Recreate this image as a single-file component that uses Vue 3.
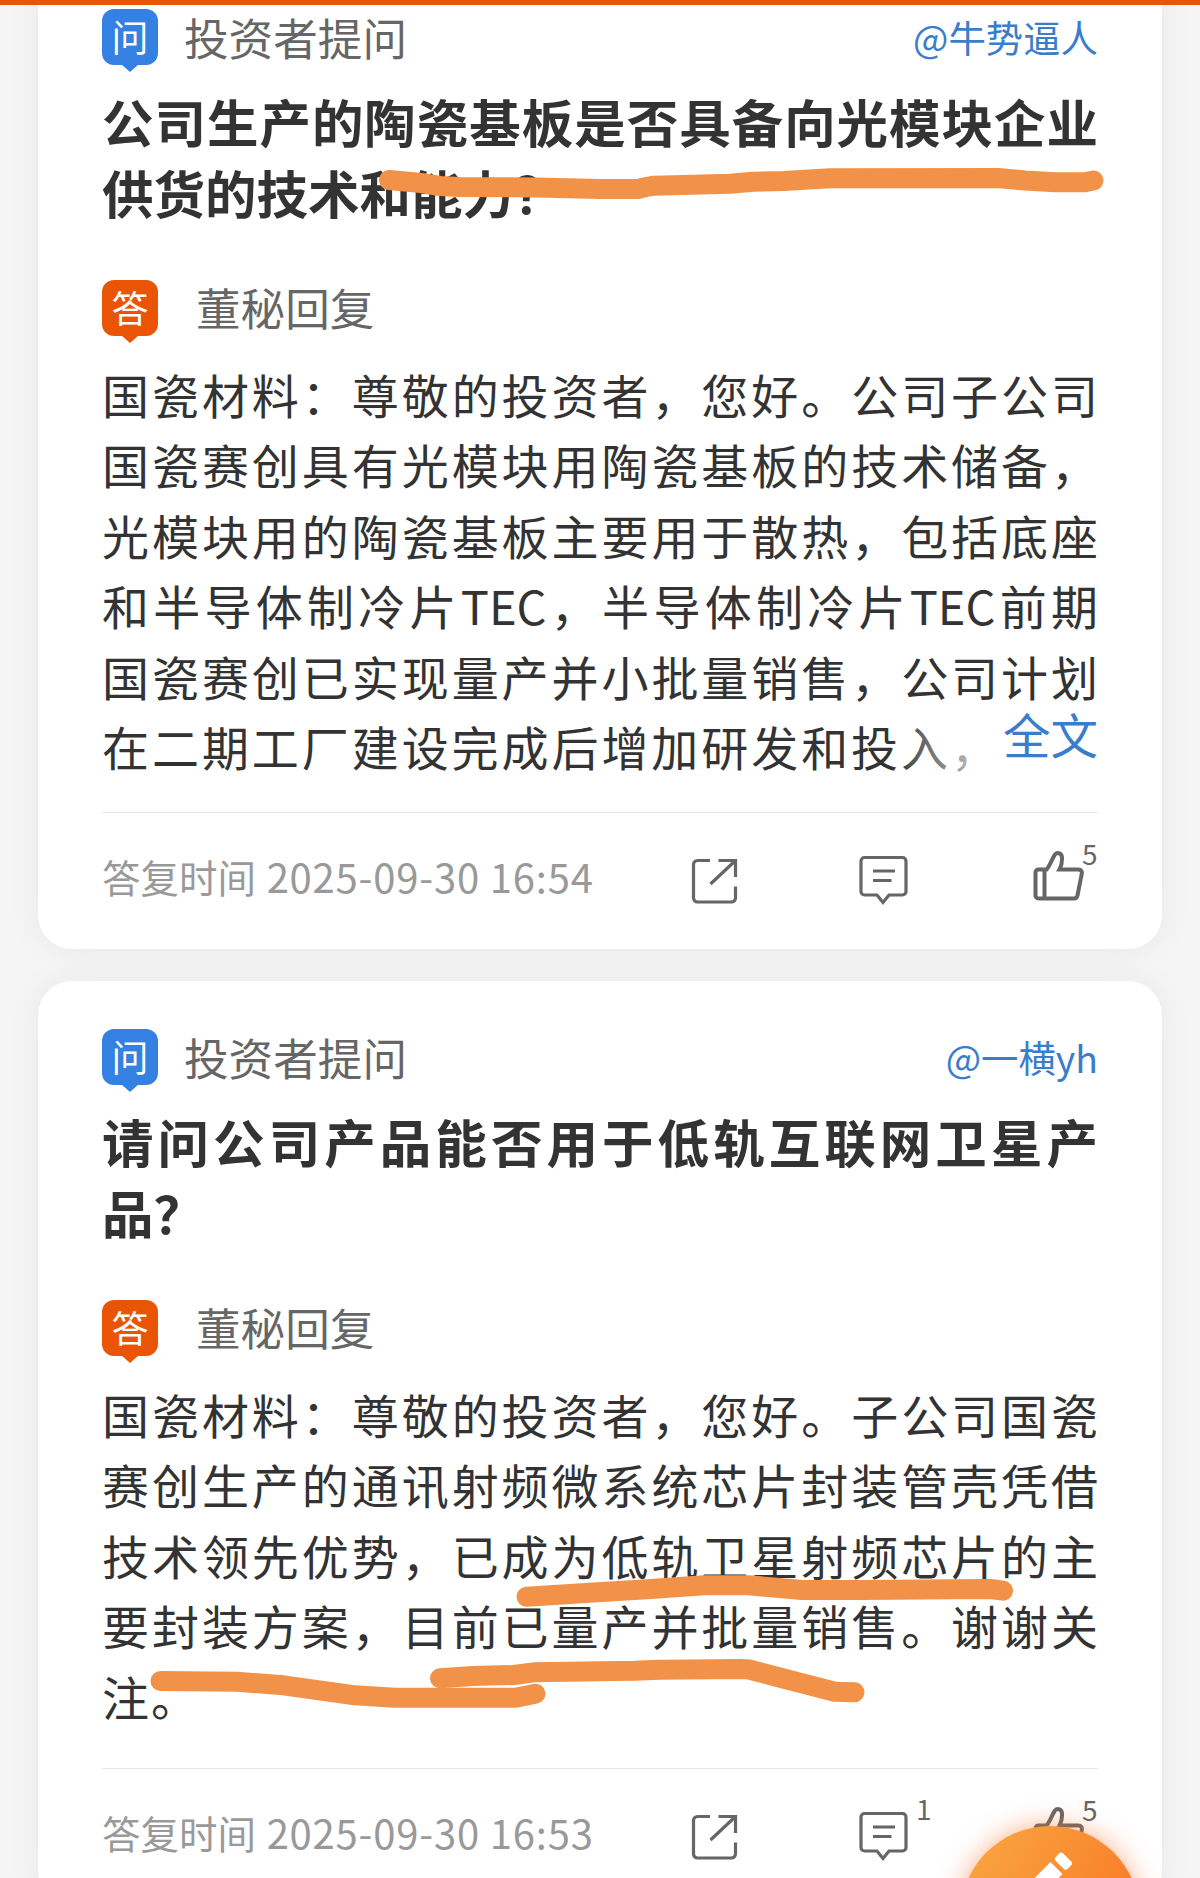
<template>
  <div class="page">
    <div class="top-bar"></div>

    <div class="feed">
      <article v-for="card in cards" :key="card.id" class="card">
        <div class="head">
          <span class="badge ask">问</span>
          <span class="head-label">投资者提问</span>
          <a class="user">@{{ card.user }}</a>
        </div>

        <h2 class="title">
          <span v-for="(line, i) in card.title" :key="i" class="line">{{ line }}</span>
        </h2>

        <div class="head reply">
          <span class="badge answer">答</span>
          <span class="head-label">董秘回复</span>
        </div>

        <div class="body" :class="{ collapsed: card.collapsed }">
          <span v-for="(line, i) in card.body" :key="i" class="line">{{ line }}</span>
          <a v-if="card.collapsed" class="more">全文</a>
        </div>

        <div class="footer">
          <span class="time">答复时间 <span class="date">{{ card.time }}</span></span>
          <button class="action" title="分享">
            <svg width="48" height="52" viewBox="0 0 48 52">
              <path d="M20 5.500H7.500a4 4 0 0 0-4 4v33.500a4 4 0 0 0 4 4H41.500a4 4 0 0 0 4-4V31.500M28.500 5.500H45.500V22M45 6L20.500 29" />
            </svg>
          </button>
          <button class="action" title="评论">
            <svg width="52" height="52" viewBox="0 0 52 52">
              <path d="M7.500 2.500H45.500a3.500 3.500 0 0 1 3.500 3.500V36.500a3.500 3.500 0 0 1-3.500 3.500H32L26 47.500L20 40H7.500a3.500 3.500 0 0 1-3.500-3.500V6A3.500 3.500 0 0 1 7.500 2.500ZM16 16H38M16 25.500H34.500" />
            </svg>
            <sup v-if="card.comments" class="count comment-count">{{ card.comments }}</sup>
          </button>
          <button class="action like" title="点赞">
            <svg width="52" height="52" viewBox="0 0 52 52">
              <path d="M5.500 19.500H13.500C17 16 18.500 9.500 22 4.500C24.500 1.500 29 3.200 29 8C29.200 12.500 28.500 16 26.500 19.500H45.500C48 19.500 49.200 21.300 48.800 23.500L44.500 45.500C44 47.500 43 48.500 41 48.500H5.500A3 3 0 0 1 2.500 45.500V22.500A3 3 0 0 1 5.500 19.500ZM11.500 19.500V48.500" />
            </svg>
            <sup class="count">{{ card.likes }}</sup>
          </button>
        </div>
      </article>
    </div>

    <!-- маркер поверх текста -->
    <svg class="marks" width="1200" height="1878" viewBox="0 0 1200 1878">
      <polyline v-for="(points, i) in marks" :key="i" :points="points" />
    </svg>

    <button class="fab" title="提问">
      <svg width="180" height="180" viewBox="0 0 180 180">
        <g transform="translate(99 29) rotate(45)">
          <rect x="-1" y="-4" width="17" height="10.500" rx="3" />
          <path d="M-1 11H16V66L7.500 78L-1 66Z" />
        </g>
      </svg>
    </button>
  </div>
</template>

<script setup>
const cards = [
  {
    id: 1,
    user: '牛势逼人',
    title: ['公司生产的陶瓷基板是否具备向光模块企业', '供货的技术和能力？'],
    body: [
      '国瓷材料：尊敬的投资者，您好。公司子公司',
      '国瓷赛创具有光模块用陶瓷基板的技术储备，',
      '光模块用的陶瓷基板主要用于散热，包括底座',
      '和半导体制冷片TEC，半导体制冷片TEC前期',
      '国瓷赛创已实现量产并小批量销售，公司计划',
      '在二期工厂建设完成后增加研发和投入，'
    ],
    collapsed: true,
    time: '2025-09-30 16:54',
    comments: 0,
    likes: 5
  },
  {
    id: 2,
    user: '一横yh',
    title: ['请问公司产品能否用于低轨互联网卫星产', '品？'],
    body: [
      '国瓷材料：尊敬的投资者，您好。子公司国瓷',
      '赛创生产的通讯射频微系统芯片封装管壳凭借',
      '技术领先优势，已成为低轨卫星射频芯片的主',
      '要封装方案，目前已量产并批量销售。谢谢关',
      '注。'
    ],
    collapsed: false,
    time: '2025-09-30 16:53',
    comments: 1,
    likes: 5
  }
];

const marks = [
  '389,180 421,183 440,186 459,187 536,187.5 600,189 638,189 646,187 654,185.7 730,183.7 753,181.7 784,181 830,178.3 998,178 1025,180.5 1055,182.3 1084,182.3 1093.500,180.500',
  '526.500,1596.700 598,1592.300 651,1589 704,1585.300 749,1585.300 802,1590 863,1590 953,1589.300 990,1589 1003,1590.700',
  '160.500,1681 237,1681.700 283.600,1685.300 355,1695.300 394,1697.700 515.700,1697.700 535.400,1693.700',
  '440,1678.300 458.600,1677 473,1676 514,1675 533.600,1672.300 634.700,1670.700 659,1669.700 741,1669 749,1669.500 777.600,1677 834.700,1691.700 854.500,1692.300'
];
</script>

<style>
body {
  margin: 0;
  background: #f5f5f5;
}
</style>

<style scoped>
.page {
  position: relative;
  display: flex;
  flex-direction: column;
  height: 1878px;
  overflow: hidden;
  background: #f5f5f5;
  font-family: "Noto Sans CJK SC", "Noto Sans", sans-serif;
  color: #333;
}

.top-bar {
  position: absolute;
  top: 0;
  left: 0;
  right: 0;
  height: 5px;
  background: #e95504;
  z-index: 2;
}

.feed {
  display: flex;
  flex-direction: column;
  gap: 32px;
  margin-top: -39px;
  padding: 0 38px;
}

.card {
  flex: none;
  padding: 48px 64px 0;
  border-radius: 34px;
  background: #fff;
  box-shadow: 0 0 34px rgba(0, 0, 0, 0.06);
}

.head {
  display: flex;
  align-items: center;
  height: 56px;
}

.reply {
  margin-top: 53px;
}

.badge {
  position: relative;
  width: 56px;
  height: 56px;
  border-radius: 12px;
  color: #fff;
  font-size: 37px;
  line-height: 54px;
  text-align: center;
}

.badge::after {
  content: "";
  position: absolute;
  top: 55px;
  left: 19px;
  border: 9px solid transparent;
  border-top: 8px solid;
  border-bottom: 0;
}

.ask {
  background: #3580e3;
}

.ask::after {
  border-top-color: #3580e3;
}

.answer {
  background: #e95504;
}

.answer::after {
  border-top-color: #e95504;
}

.head-label {
  margin-left: 26px;
  color: #666;
  font-size: 44.600px;
  line-height: 56px;
}

.reply .head-label {
  margin: -2px 0 0 38px;
}

.user {
  margin-left: auto;
  color: #3a7dcb;
  font-size: 37.400px;
  line-height: 56px;
}

.title {
  margin: 20px 0 0;
  font-size: 51.500px;
  font-weight: 700;
  line-height: 71px;
}

.line {
  display: block;
  white-space: nowrap;
  text-align-last: justify;
}

.line:last-of-type {
  text-align-last: left;
}

.body {
  position: relative;
  margin-top: 23px;
  font-size: 47px;
  line-height: 70.4px;
}

.body .line:last-of-type {
  letter-spacing: 2px;
}

.collapsed {
  height: 416px;
}

.collapsed .line:last-of-type {
  width: 896px;
  letter-spacing: 0;
  text-align-last: justify;
}

.more {
  position: absolute;
  right: 0;
  top: 350px;
  height: 74px;
  padding-left: 110px;
  background: linear-gradient(to right, rgba(255, 255, 255, 0) 0, #fff 120px);
  color: #3a7dcb;
  font-size: 47.500px;
  line-height: 50px;
}

.footer {
  display: grid;
  grid-template-columns: minmax(0, 1fr) 48px 57px 52px;
  column-gap: 119px;
  align-items: center;
  height: 136px;
  margin-top: 37px;
  padding-right: 13px;
  border-top: 1px solid #e6e6e6;
}

.time {
  margin-top: -10px;
  color: #999;
  font-size: 38.500px;
  line-height: 56px;
  white-space: nowrap;
}

.date {
  margin-left: 2px;
  font-size: 40px;
  letter-spacing: 0.800px;
}

.action {
  position: relative;
  display: flex;
  padding: 0;
  border: 0;
  background: none;
  font-family: inherit;
  cursor: pointer;
}

.action svg {
  fill: none;
  stroke: #666;
  stroke-width: 3.200;
}

.like {
  margin-top: -10px;
}

.like svg {
  stroke-width: 4;
}

.count {
  position: absolute;
  left: 49px;
  top: -13px;
  color: #666;
  font-size: 28px;
  line-height: 32px;
}

.comment-count {
  left: 59px;
  top: -19px;
}

.marks {
  position: absolute;
  top: 0;
  left: 0;
  pointer-events: none;
}

.marks polyline {
  fill: none;
  stroke: #f29249;
  stroke-width: 20;
  stroke-linecap: round;
  stroke-linejoin: round;
}

.fab {
  position: absolute;
  left: 960px;
  top: 1826px;
  width: 180px;
  height: 180px;
  padding: 0;
  border: 0;
  border-radius: 50%;
  background: linear-gradient(120deg, #f9a440 10%, #f97a26 80%);
  box-shadow: 0 0 26px rgba(249, 110, 40, 0.550);
  cursor: pointer;
}

.fab svg {
  display: block;
  fill: #fff;
}
</style>
